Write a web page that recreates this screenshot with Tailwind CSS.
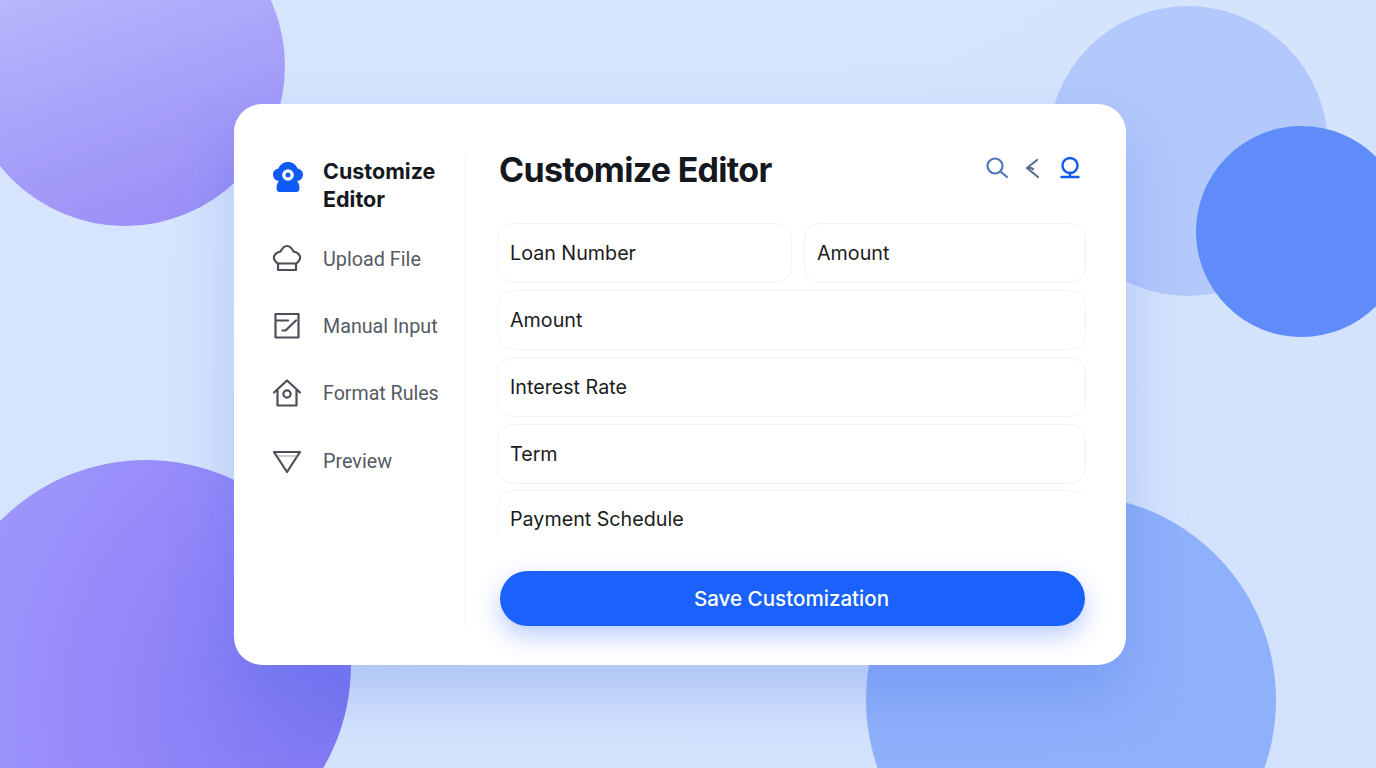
<!DOCTYPE html>
<html lang="en">
<head>
    <meta charset="UTF-8">
    <meta name="viewport" content="width=device-width, initial-scale=1.0">
    <title>Customize Editor</title>
    <script src="https://cdn.jsdelivr.net/npm/@tailwindcss/browser@4"></script>
</head>
<body class="font-[Inter,sans-serif]">
    <div class="relative w-[1376px] h-[768px] overflow-hidden flex items-center justify-center bg-gradient-to-br from-[#d7e6fe] to-[#d3e2fc]">
        <!-- background circles -->
        <div class="absolute left-[-35px] top-[-94px] w-[320px] h-[320px] rounded-full bg-[linear-gradient(160deg,#c6c6fe,#a9a3fa_55%,#9689f5)]"></div>
        <div class="absolute left-[1048px] top-[6px] w-[280px] h-[290px] rounded-full bg-[#b3c8fb]"></div>
        <div class="absolute left-[1196px] top-[126px] w-[211px] h-[211px] rounded-full bg-[#5f8cf9]"></div>
        <div class="absolute left-[-59px] top-[460px] w-[410px] h-[410px] rounded-full bg-[radial-gradient(circle_at_100%_60%,#7b76f0,#9487fa_50%,#a39dfb)]"></div>
        <div class="absolute left-[866px] top-[495px] w-[410px] h-[410px] rounded-full bg-[#8fb0fa]"></div>

        <!-- card -->
        <div class="relative flex w-[892px] h-[561px] mr-[16px] pt-[49px] pb-[39px] bg-white rounded-[28px] shadow-[0_30px_60px_rgba(60,100,230,0.26)]">
            <!-- sidebar -->
            <div class="w-[232px] pl-[38px] border-r border-[#f0f1f4]">
                <div class="flex gap-[19px] mb-[31px]">
                    <svg class="w-[32px] h-[34px] mt-[6px] shrink-0" viewBox="0 0 32 34">
                        <path fill="#0f5bf5" d="M16 3c4.500 0 8 2.500 9.500 6.500 3 .3 5.500 3 5.500 6 0 3-2.500 6.500-6 6.500H7c-3.500 0-6-3.500-6-6.500s2.500-5.700 5.500-6C8 5.500 11.500 3 16 3z"/>
                        <path fill="#0f5bf5" d="M9 21h14c3 1 4.500 4 4.500 8 0 2.500-1 4-3 4H7.500c-2 0-3-1.500-3-4 0-4 1.500-7 4.500-8z"/>
                        <circle cx="16" cy="16" r="5.800" fill="#fff"/>
                        <circle cx="16" cy="16" r="2.500" fill="#0f5bf5"/>
                    </svg>
                    <div class="text-[21.500px] leading-[28px] font-bold text-[#15181e] mt-[4px]">Customize<br>Editor</div>
                </div>
                <div class="flex flex-col gap-[37px]">
                    <div class="flex items-center gap-[21px] h-[30px]">
                        <svg class="w-[30px] h-[30px] shrink-0" viewBox="0 0 30 30" fill="none" stroke="#4b4f58" stroke-width="2.200" stroke-linejoin="round" stroke-linecap="round">
                            <path d="M6 19.500C3.500 18.500 1.500 15 2 12.500 3 9.500 6 8 8.500 7.500 10 4.500 12.500 2 15 2c2.500 0 5 2.500 6.500 5.500 2.500.5 5.500 2 6.500 5 .5 2.500-1.500 6-4 7z"/>
                            <path d="M6 19.500v6.500h18v-6.500"/>
                        </svg>
                        <span class="pt-[2px] text-[19.800px] font-[Roboto,sans-serif] text-[#555a63]">Upload File</span>
                    </div>
                    <div class="flex items-center gap-[21px] h-[30px]">
                        <svg class="w-[30px] h-[30px] shrink-0" viewBox="0 0 30 30" fill="none" stroke="#4b4f58" stroke-width="2.200" stroke-linejoin="round" stroke-linecap="round">
                            <rect x="3.500" y="3" width="23" height="23.500"/>
                            <path d="M5 9.500h11M24 9.500 13.500 19.500h-3"/>
                        </svg>
                        <span class="pt-[2px] text-[19.700px] font-[Roboto,sans-serif] text-[#555a63]">Manual Input</span>
                    </div>
                    <div class="flex items-center gap-[21px] h-[30px]">
                        <svg class="w-[30px] h-[30px] shrink-0" viewBox="0 0 30 30" fill="none" stroke="#4b4f58" stroke-width="2.200" stroke-linejoin="round" stroke-linecap="round">
                            <path d="M2 14.500 15 2.500l13 12M5.500 12v15.500h19V12"/>
                            <circle cx="15" cy="16" r="3.600"/>
                        </svg>
                        <span class="pt-[2px] text-[19.600px] font-[Roboto,sans-serif] text-[#555a63]">Format Rules</span>
                    </div>
                    <div class="flex items-center gap-[21px] h-[30px] mt-[1px]">
                        <svg class="w-[30px] h-[30px] shrink-0" viewBox="0 0 30 30" fill="none" stroke="#4b4f58" stroke-width="2.200" stroke-linejoin="round" stroke-linecap="round">
                            <path d="M2 6h26L15 26z"/>
                            <path d="M6 10h18" stroke-width="1.200" stroke="#9a9da3"/>
                        </svg>
                        <span class="pt-[2px] text-[19.800px] font-[Roboto,sans-serif] text-[#555a63]">Preview</span>
                    </div>
                </div>
            </div>

            <!-- main -->
            <div class="flex-1 flex flex-col pl-[31px] pr-[40px]">
                <div class="flex items-center justify-between h-[34px] mb-[36px]">
                    <h1 class="pl-[2px] text-[34px] font-bold tracking-[-0.7px] text-[#15181e]">Customize Editor</h1>
                    <div class="flex items-center gap-[14px] pr-[4px] mb-[4px]">
                        <svg class="w-[24px] h-[24px]" viewBox="0 0 24 24" fill="none" stroke="#4f76b8" stroke-width="2.200" stroke-linecap="round">
                            <circle cx="10" cy="10" r="7.500"/>
                            <path d="m16 16 6 5"/>
                        </svg>
                        <svg class="w-[21px] h-[24px]" viewBox="0 0 21 24" fill="none" stroke="#5b6d8c" stroke-width="2.200" stroke-linecap="round" stroke-linejoin="round">
                            <path d="M14 4 4 12l11 9M4 12c2-.8 4-.4 6 1"/>
                        </svg>
                        <svg class="w-[24px] h-[24px]" viewBox="0 0 24 24" fill="none" stroke="#0f5bf5" stroke-width="2.400" stroke-linecap="round">
                            <circle cx="12" cy="9.500" r="7.500"/>
                            <path d="M12 17v4M3.500 21h17"/>
                        </svg>
                    </div>
                </div>

                <div class="h-[313px] overflow-hidden flex flex-col gap-[7px] text-[19.700px] text-[#1a1c21]">
                    <div class="flex gap-[12px]">
                        <div class="flex-1 h-[60px] flex items-center pl-[12px] pt-[2px] border border-[#f2f3f6] rounded-[16px]">Loan Number</div>
                        <div class="w-[282px] h-[60px] flex items-center pl-[12px] pt-[2px] border border-[#f2f3f6] rounded-[16px]">Amount</div>
                    </div>
                    <div class="h-[60px] shrink-0 flex items-center pl-[12px] pt-[2px] border border-[#f2f3f6] rounded-[16px]">Amount</div>
                    <div class="h-[60px] shrink-0 flex items-center pl-[12px] pt-[2px] border border-[#f2f3f6] rounded-[16px]">Interest Rate</div>
                    <div class="h-[60px] shrink-0 flex items-center pl-[12px] pt-[2px] border border-[#f2f3f6] rounded-[16px]">Term</div>
                    <div class="h-[57px] shrink-0 -mt-[1px] flex items-center pl-[12px] pt-[4px] border border-[#f2f3f6] border-r-transparent rounded-[16px]">Payment Schedule</div>
                </div>

                <button class="mt-auto ml-[3px] mr-[1px] h-[55px] pt-[2px] pr-[2px] rounded-full bg-[#1a62fb] text-white text-[20.600px] font-medium shadow-[0_10px_24px_rgba(30,90,250,0.3)]">Save Customization</button>
            </div>
        </div>
    </div>
</body>
</html>
